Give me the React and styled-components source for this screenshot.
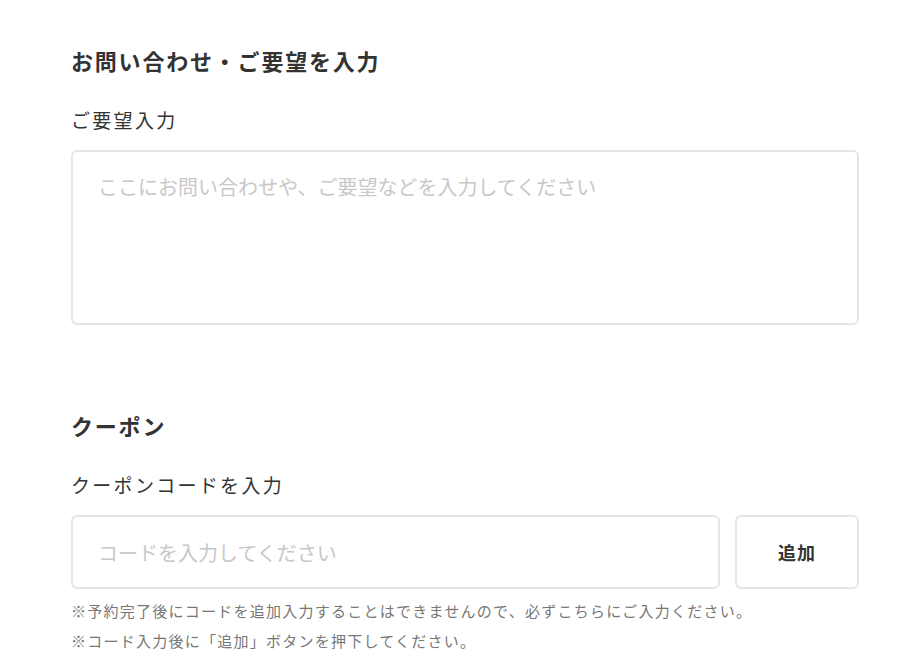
import React from "react";
import styled, { createGlobalStyle } from "styled-components";

const Global = createGlobalStyle`
  html, body { margin: 0; padding: 0; background: #fff; }
  body { font-family: "Noto Sans CJK JP", "Noto Sans", sans-serif; color: #333; }
`;

const Page = styled.div`
  width: 788px;
  padding: 40px 0 0 71px;
  display: flex;
  flex-direction: column;
`;

const Section = styled.section`
  display: flex;
  flex-direction: column;
  margin-bottom: ${(p) => p.$mb || 0}px;
`;

const Heading = styled.h2`
  margin: 0 0 25px;
  font-size: 22px;
  font-weight: 700;
  letter-spacing: 1.8px;
  line-height: 40px;
  color: #333;
`;

const Label = styled.label`
  font-size: 19px;
  letter-spacing: 2.3px;
  line-height: 30px;
  color: #333;
  margin-bottom: 15px;
`;

const TextArea = styled.textarea`
  box-sizing: border-box;
  width: 100%;
  height: 175px;
  border: 2px solid #e5e5e5;
  border-radius: 6px;
  padding: 20px 25px;
  font-family: inherit;
  font-size: 20px;
  line-height: 30px;
  resize: none;
  outline: none;
  &::placeholder { color: #c8c8c8; }
`;

const Row = styled.div`
  display: flex;
  gap: 15px;
`;

const Input = styled.input`
  box-sizing: border-box;
  flex: 1;
  height: 74px;
  border: 2px solid #e5e5e5;
  border-radius: 6px;
  padding: 0 25px;
  font-family: inherit;
  font-size: 20px;
  outline: none;
  &::placeholder { color: #c8c8c8; }
`;

const Button = styled.button`
  box-sizing: border-box;
  width: 124px;
  height: 74px;
  border: 2px solid #e5e5e5;
  border-radius: 6px;
  background: #fff;
  font-family: inherit;
  font-size: 18px;
  font-weight: 700;
  color: #333;
  letter-spacing: 1px;
  cursor: pointer;
`;

const Notes = styled.div`
  margin-top: 7px;
  display: flex;
  flex-direction: column;
`;

const Note = styled.p`
  margin: 0;
  font-size: 15px;
  letter-spacing: 1.25px;
  line-height: 30px;
  color: #777;
`;

export default function App() {
  return (
    <>
      <Global />
      <Page>
        <Section $mb={80}>
          <Heading>お問い合わせ・ご要望を入力</Heading>
          <Label>ご要望入力</Label>
          <TextArea placeholder="ここにお問い合わせや、ご要望などを入力してください" />
        </Section>
        <Section>
          <Heading>クーポン</Heading>
          <Label>クーポンコードを入力</Label>
          <Row>
            <Input placeholder="コードを入力してください" />
            <Button>追加</Button>
          </Row>
          <Notes>
            <Note>※予約完了後にコードを追加入力することはできませんので、必ずこちらにご入力ください。</Note>
            <Note>※コード入力後に「追加」ボタンを押下してください。</Note>
          </Notes>
        </Section>
      </Page>
    </>
  );
}
